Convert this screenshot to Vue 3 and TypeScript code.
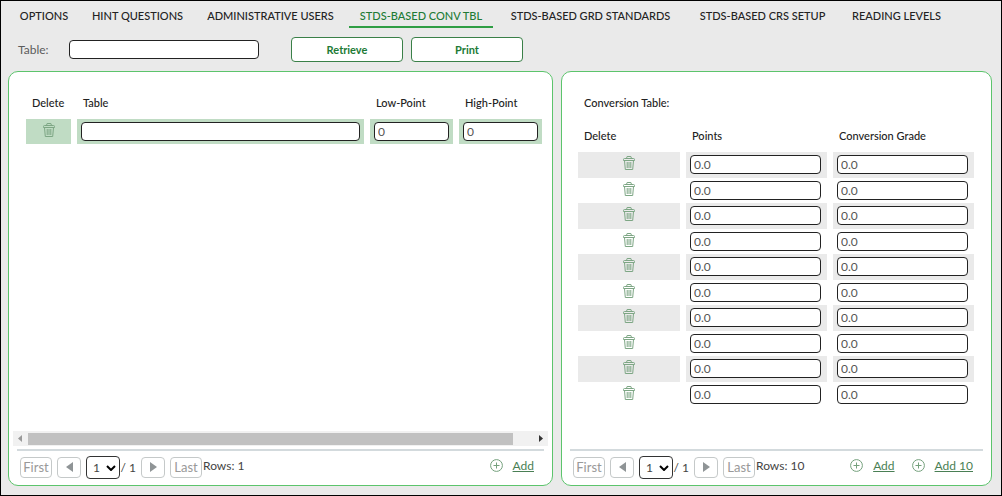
<script setup lang="ts">
import { ref, reactive } from 'vue'

interface ConversionRow {
  points: string
  grade: string
}

const tabs = [
  'OPTIONS',
  'HINT QUESTIONS',
  'ADMINISTRATIVE USERS',
  'STDS-BASED CONV TBL',
  'STDS-BASED GRD STANDARDS',
  'STDS-BASED CRS SETUP',
  'READING LEVELS',
]
const activeTab = ref('STDS-BASED CONV TBL')
const search = ref('')
const tables = reactive([{ name: '', low: '0', high: '0' }])
const rows = reactive<ConversionRow[]>(
  Array.from({ length: 10 }, () => ({ points: '0.0', grade: '0.0' })),
)

function addTable() {
  tables.push({ name: '', low: '0', high: '0' })
}
function addRows(count: number) {
  for (let i = 0; i < count; i++) rows.push({ points: '0.0', grade: '0.0' })
}
</script>

<template>
  <div class="page">
    <nav class="tabs">
      <a
        v-for="tab in tabs"
        :key="tab"
        href="#"
        class="tab"
        :class="{ active: tab === activeTab }"
        @click.prevent="activeTab = tab"
      >{{ tab }}</a>
    </nav>

    <form class="search" @submit.prevent>
      <label for="table-search">Table:</label>
      <input id="table-search" v-model="search" class="field search-field" type="text" />
      <button class="action" type="submit">Retrieve</button>
      <button class="action" type="button">Print</button>
    </form>

    <main class="panels">
      <section class="panel">
        <table class="grid tables">
          <colgroup>
            <col class="c-delete" />
            <col />
            <col class="c-point" />
            <col class="c-point" />
          </colgroup>
          <thead>
            <tr>
              <th scope="col">Delete</th>
              <th scope="col">Table</th>
              <th scope="col">Low-Point</th>
              <th scope="col">High-Point</th>
            </tr>
          </thead>
          <tbody>
            <tr v-for="(row, i) in tables" :key="i">
              <td class="trash-cell">
                <button class="trash" type="button" aria-label="Delete row" @click="tables.splice(i, 1)">
                  <svg viewBox="0 0 12 14" width="12" height="14">
                    <path d="M.5 3.5q0-1 1-1h9q1 0 1 1v1H.5zM1.500 4.500l.8 9h7.400l.8-9M3.500 2.500l.6-2h3.800l.6 2M4.200 6v6M6 6v6M7.800 6v6" />
                  </svg>
                </button>
              </td>
              <td><input v-model="row.name" class="field" type="text" aria-label="Table" /></td>
              <td><input v-model="row.low" class="field" type="text" aria-label="Low-Point" /></td>
              <td><input v-model="row.high" class="field" type="text" aria-label="High-Point" /></td>
            </tr>
          </tbody>
        </table>

        <div class="scrollbar">
          <svg class="arrow dim" viewBox="0 0 15 15" width="15" height="15"><path d="M9 4v7L5 7.500z" /></svg>
          <div class="track"><div class="thumb"></div></div>
          <svg class="arrow" viewBox="0 0 15 15" width="15" height="15"><path d="M6 4v7l4-3.500z" /></svg>
        </div>

        <footer class="footer">
          <button class="page-btn" type="button" disabled>First</button>
          <button class="page-btn step" type="button" disabled aria-label="Previous page">
            <svg viewBox="0 0 7 10" width="7" height="10"><path d="M7 0v10L0 5z" /></svg>
          </button>
          <span class="select-wrap">
            <select class="page-select" aria-label="Page"><option>1</option></select>
            <svg viewBox="0 0 10 6" width="10" height="6"><path d="M1 1l4 4 4-4" /></svg>
          </span>
          <span class="total">/ 1</span>
          <button class="page-btn step" type="button" disabled aria-label="Next page">
            <svg viewBox="0 0 7 10" width="7" height="10"><path d="M0 0v10l7-5z" /></svg>
          </button>
          <button class="page-btn" type="button" disabled>Last</button>
          <span class="count">Rows: {{ tables.length }}</span>
          <div class="adds">
            <a href="#" class="add" @click.prevent="addTable">
              <svg viewBox="0 0 13 13" width="13" height="13"><circle cx="6.500" cy="6.500" r="5.900" /><path d="M6.500 3.500v6M3.500 6.500h6" /></svg>
              <span>Add</span>
            </a>
          </div>
        </footer>
      </section>

      <section class="panel">
        <h2 class="title">Conversion Table:</h2>
        <table class="grid conversion">
          <colgroup>
            <col class="c-trash" />
            <col />
            <col />
          </colgroup>
          <thead>
            <tr>
              <th scope="col">Delete</th>
              <th scope="col">Points</th>
              <th scope="col">Conversion Grade</th>
            </tr>
          </thead>
          <tbody>
            <tr v-for="(row, i) in rows" :key="i">
              <td class="trash-cell">
                <button class="trash" type="button" aria-label="Delete row" @click="rows.splice(i, 1)">
                  <svg viewBox="0 0 12 14" width="12" height="14">
                    <path d="M.5 3.5q0-1 1-1h9q1 0 1 1v1H.5zM1.500 4.500l.8 9h7.400l.8-9M3.500 2.500l.6-2h3.800l.6 2M4.200 6v6M6 6v6M7.800 6v6" />
                  </svg>
                </button>
              </td>
              <td><input v-model="row.points" class="field" type="text" aria-label="Points" /></td>
              <td><input v-model="row.grade" class="field" type="text" aria-label="Conversion Grade" /></td>
            </tr>
          </tbody>
        </table>

        <footer class="footer">
          <button class="page-btn" type="button" disabled>First</button>
          <button class="page-btn step" type="button" disabled aria-label="Previous page">
            <svg viewBox="0 0 7 10" width="7" height="10"><path d="M7 0v10L0 5z" /></svg>
          </button>
          <span class="select-wrap">
            <select class="page-select" aria-label="Page"><option>1</option></select>
            <svg viewBox="0 0 10 6" width="10" height="6"><path d="M1 1l4 4 4-4" /></svg>
          </span>
          <span class="total">/ 1</span>
          <button class="page-btn step" type="button" disabled aria-label="Next page">
            <svg viewBox="0 0 7 10" width="7" height="10"><path d="M0 0v10l7-5z" /></svg>
          </button>
          <button class="page-btn" type="button" disabled>Last</button>
          <span class="count">Rows: {{ rows.length }}</span>
          <div class="adds">
            <a href="#" class="add" @click.prevent="addRows(1)">
              <svg viewBox="0 0 13 13" width="13" height="13"><circle cx="6.500" cy="6.500" r="5.900" /><path d="M6.500 3.500v6M3.500 6.500h6" /></svg>
              <span>Add</span>
            </a>
            <a href="#" class="add" @click.prevent="addRows(10)">
              <svg viewBox="0 0 13 13" width="13" height="13"><circle cx="6.500" cy="6.500" r="5.900" /><path d="M6.500 3.500v6M3.500 6.500h6" /></svg>
              <span>Add 10</span>
            </a>
          </div>
        </footer>
      </section>
    </main>
  </div>
</template>

<style>
body {
  background: #eaeaea;
}
</style>

<style scoped>
.page,
.page * {
  box-sizing: border-box;
}
.page {
  display: flex;
  flex-direction: column;
  min-height: 100vh;
  padding: 4px 9px 9px 7px;
  border: 1px solid #000;
  background: #eaeaea;
  color: #222;
  font-family: Lato, "Noto Sans", sans-serif;
  font-size: 12px;
  font-weight: 400;
}
button,
input,
select {
  font: inherit;
  margin: 0;
}
.tabs {
  display: grid;
  grid-template-columns: 66px 109px 145px 144px 183px 149px 107px;
  gap: 6px;
  padding-left: 3px;
}
.tab {
  padding: 3px 0 2px;
  border-bottom: 2px solid transparent;
  color: #222;
  font-size: 11px;
  font-weight: 500;
  line-height: 16px;
  text-align: center;
  text-decoration: none;
  white-space: nowrap;
}
.tab.active {
  border-color: #2f9e44;
  color: #217a35;
}
.search {
  display: flex;
  align-items: center;
  margin-top: 9px;
  padding-left: 10px;
}
.search label {
  width: 51px;
  color: #5c5c5c;
}
.field {
  display: block;
  width: 100%;
  height: 19px;
  padding: 0 3px;
  border: 1px solid #222;
  border-radius: 4px;
  background: #fff;
  color: #555;
  line-height: 16px;
}
.search-field {
  width: 190px;
  margin-right: 32px;
}
.action {
  width: 112px;
  height: 25px;
  margin-right: 8px;
  padding: 0;
  border: 1px solid #3a8048;
  border-radius: 4px;
  background: #fff;
  color: #217a35;
  font-size: 11px;
  font-weight: 700;
}
.panels {
  display: grid;
  flex: 1;
  grid-template-columns: 545fr 431fr;
  gap: 8px;
  margin-top: 9px;
}
.panel {
  display: flex;
  flex-direction: column;
  min-width: 0;
  padding-top: 22px;
  border: 1px solid #5cc46c;
  border-radius: 10px;
  background: #fff;
}
.grid {
  table-layout: fixed;
  border-collapse: separate;
  border-spacing: 6px 0;
}
.tables {
  width: calc(100% - 15px);
  margin: 0 4px 0 11px;
}
.tables,
.conversion {
  margin-bottom: auto;
}
.conversion {
  width: calc(100% - 21px);
  margin-left: 10px;
}
.c-delete {
  width: 45px;
}
.c-point {
  width: 83px;
}
.c-trash {
  width: 102px;
}
.grid th {
  height: 25px;
  padding: 0 6px 8px;
  font-size: 11px;
  font-weight: 500;
  line-height: 17px;
  text-align: left;
  vertical-align: top;
  white-space: nowrap;
}
.grid td {
  height: 25px;
  padding: 3px 4px;
  vertical-align: top;
}
.conversion td {
  padding-right: 6px;
}
.conversion tbody tr:nth-child(odd) td {
  height: 26px;
  background: #eaeaea;
}
.tables tbody td {
  background: #c0dcc4;
}
.grid .trash-cell {
  padding: 4px 0 0;
  text-align: center;
}
.trash {
  display: inline-block;
  padding: 0;
  border: 0;
  background: none;
  line-height: 0;
}
.trash path {
  fill: none;
  stroke: #7da684;
}
.title {
  height: 33px;
  margin: 0;
  padding-left: 22px;
  font-size: 11px;
  font-weight: 500;
  line-height: 17px;
}
.scrollbar {
  display: flex;
  height: 15px;
  margin: 0 4px 3px;
  background: #f1f1f1;
}
.track {
  flex: 1;
  padding: 2px 0;
}
.thumb {
  width: 96%;
  height: 12px;
  background: #c1c1c1;
}
.arrow {
  fill: #333;
}
.arrow.dim {
  fill: #999;
}
.footer {
  display: flex;
  align-items: center;
  margin: 0 8px;
  padding: 5px 10px 6px 3px;
  border-top: 2px solid #d3dadd;
}
.page-btn {
  width: 32px;
  height: 21px;
  padding: 0;
  border: 1px solid #c5c9c9;
  border-radius: 4px;
  background: #fff;
  color: #999;
  font-size: 13px;
  line-height: 19px;
}
.step {
  width: 24px;
  margin: 0 5px;
  fill: #8f9496;
}
.select-wrap {
  display: grid;
  align-items: center;
}
.select-wrap > * {
  grid-area: 1 / 1;
}
.select-wrap svg {
  justify-self: end;
  margin-right: 4px;
  fill: none;
  stroke: #000;
  stroke-width: 2;
  pointer-events: none;
}
.page-select {
  width: 34px;
  height: 23px;
  padding: 0 0 0 6px;
  border: 1px solid #333;
  border-radius: 4px;
  appearance: none;
  background: #fff;
  color: #444;
}
.total {
  width: 16px;
  color: #444;
  text-align: right;
}
.count {
  padding: 0 0 5px 1px;
  color: #444;
}
.adds {
  display: flex;
  gap: 17px;
  margin-left: auto;
  padding-bottom: 4px;
}
.add {
  display: flex;
  align-items: center;
  gap: 10px;
  color: #4a7f55;
  text-decoration: none;
}
.add span {
  text-decoration: underline;
}
.add svg {
  fill: none;
  stroke: #74a07c;
}
</style>
